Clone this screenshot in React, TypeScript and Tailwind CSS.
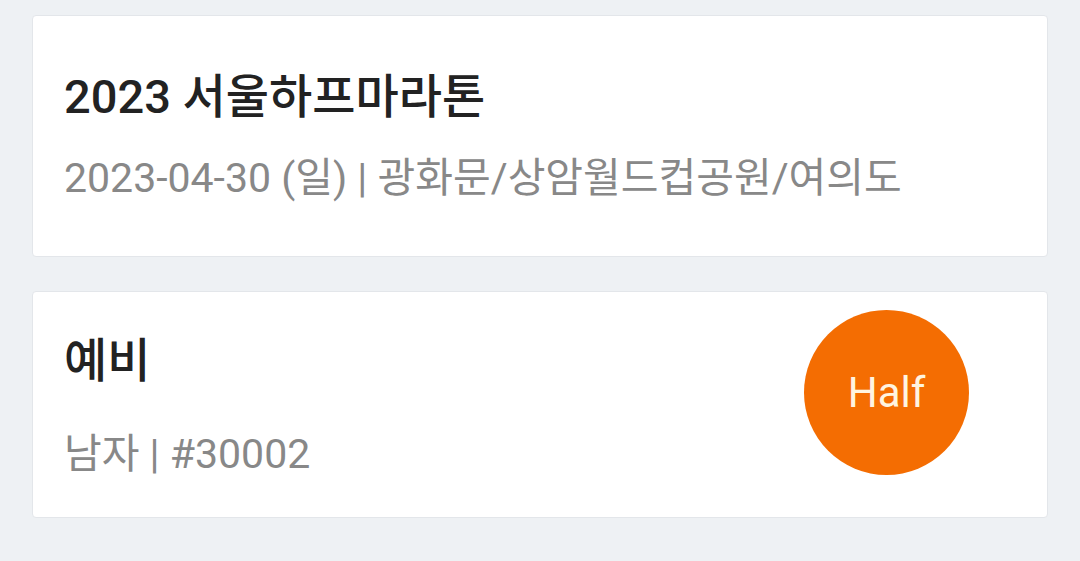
export default function App() {
  return (
    <div
      className="w-[1080px] h-[561px] bg-[#eef1f4] px-[32px] pt-[15px] flex flex-col gap-[34px]"
      style={{ fontFamily: 'Roboto, "Noto Sans CJK KR", sans-serif' }}
    >
      <div className="h-[242px] bg-white border border-[#e3e6ea] rounded-[4px] pl-[31px] pt-[53px] flex flex-col">
        <div className="text-[47px] leading-[56px] font-medium text-[#222222] whitespace-nowrap">2023 서울하프마라톤</div>
        <div className="mt-[29px] text-[41px] leading-[48px] text-[#888888] whitespace-nowrap">2023-04-30 (일) | 광화문/상암월드컵공원/여의도</div>
      </div>
      <div className="h-[227px] bg-white border border-[#e3e6ea] rounded-[4px] pl-[31px] pr-[78px] flex justify-between items-start">
        <div className="flex flex-col pt-[41px]">
          <div className="text-[47px] leading-[56px] font-medium text-[#222222]">예비</div>
          <div className="mt-[41px] text-[41px] leading-[48px] text-[#888888] whitespace-nowrap">남자 | #30002</div>
        </div>
        <div className="mt-[18px] w-[165px] h-[165px] rounded-full bg-[#f46d02] flex items-center justify-center">
          <span className="text-[42px] text-[#fff4e0] leading-none">Half</span>
        </div>
      </div>
    </div>
  );
}
